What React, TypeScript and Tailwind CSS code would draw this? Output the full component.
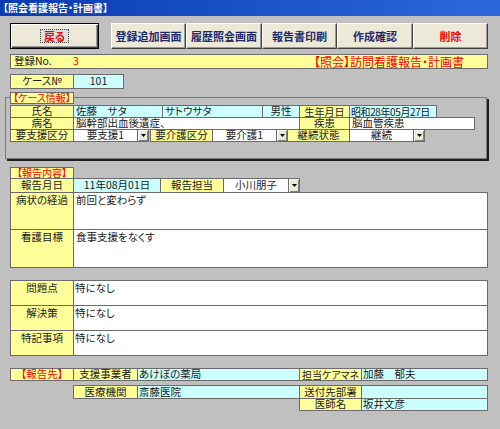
import React from "react";

const cell =
  "box-border border border-[#6b6b6b] flex items-center shrink-0 text-[10.5px] leading-none whitespace-nowrap text-[#1a1a1a]";
const yellow = "bg-[#ffff99] justify-center";
const cyan = "bg-[#ccffff]";

const Combo = ({ className, text }: { className: string; text: string }) => (
  <div className={`${cell} bg-white ${className}`}>
    <span className="flex-1 text-center">{text}</span>
    <span className="w-[11px] h-full box-border bg-[#ece9d8] border-l border-[#6b6b6b] shadow-[inset_1px_1px_0_#fff,inset_-1px_-1px_0_#808080] flex items-center justify-center">
      <svg width="5" height="3" viewBox="0 0 5 3">
        <path d="M0 0h5L2.5 3z" fill="#000" />
      </svg>
    </span>
  </div>
);

const btn =
  "box-border h-[26px] shrink-0 bg-[#ece9d8] border border-t-white border-l-white border-r-[#404040] border-b-[#404040] shadow-[inset_-1px_-1px_0_#9a9a9a] flex items-center justify-center text-[11px] font-bold text-[#1c2a6b]";

export default function App() {
  return (
    <div className="w-[500px] h-[429px] overflow-hidden bg-[#c0c0c0] flex flex-col [font-family:'Noto_Sans_CJK_JP','Liberation_Sans',sans-serif] [font-feature-settings:'palt']">
      {/* Title */}
      <div className="h-[16px] shrink-0 bg-gradient-to-r from-[#0a3ab4] to-[#2c68dc] flex items-center pl-[3px] text-white text-[10px] font-bold leading-none">
        【照会看護報告・計画書】
      </div>

      {/* Buttons */}
      <div className="flex mt-[7px] ml-[10px]">
        <div className="box-border h-[26px] w-[89px] shrink-0 bg-[#ece9d8] border border-black shadow-[inset_1px_1px_0_#fff,inset_-1px_-1px_0_#404040,inset_-2px_-2px_0_#9a9a9a] flex items-center justify-center">
          <span className="border border-dotted border-[#444] bg-[#d6e2e2] px-[3px] text-[11px] font-bold leading-[12px] text-[#ff0000]">
            戻る
          </span>
        </div>
        <div className={`${btn} w-[75px] ml-[12px]`}>登録追加画面</div>
        <div className={`${btn} w-[76px]`}>履歴照会画面</div>
        <div className={`${btn} w-[75px]`}>報告書印刷</div>
        <div className={`${btn} w-[76px]`}>作成確認</div>
        <div className={`${btn} w-[75px] text-[#ff0000]`}>削除</div>
      </div>

      {/* Registration bar */}
      <div className={`${cell} bg-[#ffff99] w-[478px] h-[15px] mt-[5px] ml-[10px] pl-[3px]`}>
        <span className="w-[59px]">登録No.</span>
        <span className="text-[#ff0000]">3</span>
        <span className="ml-auto mr-[23px] text-[12px] text-[#ff0000]">【照会】訪問看護報告・計画書</span>
      </div>

      {/* Case No */}
      <div className="flex mt-[5px] ml-[10px] h-[15px]">
        <div className={`${cell} ${yellow} w-[64px]`}>ケース№</div>
        <div className={`${cell} ${cyan} w-[51px] -ml-px justify-center`}>101</div>
      </div>

      {/* Case info group */}
      <div className="box-border mt-[8px] ml-[5px] w-[482px] h-[62px] shrink-0 border border-[#7a7a7a] shadow-[2px_2px_0_#1e1e1e] flex flex-col">
        <div className={`${cell} ${yellow} w-[64px] h-[12px] -mt-[6px] ml-[4px] text-[10px] text-[#ff0000]`}>【ケース情報】</div>
        <div className="flex ml-[4px] mt-[1px] h-[13px]">
          <div className={`${cell} ${yellow} w-[64px]`}>氏名</div>
          <div className={`${cell} ${cyan} w-[90px] -ml-px pl-[2px]`}>佐藤　サタ</div>
          <div className={`${cell} ${cyan} w-[101px] -ml-px pl-[2px]`}>サトウサタ</div>
          <div className={`${cell} ${cyan} w-[38px] -ml-px justify-center`}>男性</div>
          <div className={`${cell} ${yellow} w-[51px] -ml-px text-[10px]`}>生年月日</div>
          <div className={`${cell} ${cyan} w-[88px] -ml-px pl-[1px] text-[10px] tracking-[-0.4px]`}>昭和28年05月27日</div>
        </div>
        <div className="flex ml-[4px] -mt-px h-[13px]">
          <div className={`${cell} ${yellow} w-[64px]`}>病名</div>
          <div className={`${cell} bg-white w-[227px] -ml-px pl-[2px]`}>脳幹部出血後遺症、</div>
          <div className={`${cell} ${yellow} w-[51px] -ml-px`}>疾患</div>
          <div className={`${cell} bg-white w-[126px] -ml-px pl-[2px]`}>脳血管疾患</div>
        </div>
        <div className="flex ml-[4px] -mt-px h-[13px]">
          <div className={`${cell} ${yellow} w-[64px]`}>要支援区分</div>
          <Combo className="w-[76px] -ml-px" text="要支援1" />
          <div className={`${cell} ${yellow} w-[63px] ml-px`}>要介護区分</div>
          <Combo className="w-[76px] -ml-px" text="要介護1" />
          <div className={`${cell} ${yellow} w-[63px] -ml-px`}>継続状態</div>
          <Combo className="w-[76px] -ml-px" text="継続" />
        </div>
      </div>

      {/* Report content */}
      <div className={`${cell} ${yellow} w-[64px] h-[12px] mt-[8px] ml-[10px] text-[10px] text-[#ff0000]`}>【報告内容】</div>
      <div className="flex ml-[10px] -mt-px h-[15px]">
        <div className={`${cell} ${yellow} w-[64px]`}>報告月日</div>
        <div className={`${cell} ${cyan} w-[88px] -ml-px justify-center`}>11年08月01日</div>
        <div className={`${cell} ${yellow} w-[64px] -ml-px`}>報告担当</div>
        <Combo className="w-[77px] -ml-px" text="小川朋子" />
      </div>
      <div className="flex ml-[10px] -mt-px h-[38px]">
        <div className={`${cell} ${yellow} w-[64px] items-start pt-[2px]`}>病状の経過</div>
        <div className={`${cell} bg-white w-[415px] -ml-px items-start pt-[2px] pl-[2px]`}>前回と変わらず</div>
      </div>
      <div className="flex ml-[10px] -mt-px h-[39px]">
        <div className={`${cell} ${yellow} w-[64px] items-start pt-[2px]`}>看護目標</div>
        <div className={`${cell} bg-white w-[415px] -ml-px items-start pt-[2px] pl-[2px]`}>食事支援をなくす</div>
      </div>

      {/* Problems */}
      <div className="flex ml-[10px] mt-[12px] h-[26px]">
        <div className={`${cell} ${yellow} w-[64px] items-start pt-[2px]`}>問題点</div>
        <div className={`${cell} bg-white w-[415px] -ml-px items-start pt-[2px] pl-[1px]`}>特になし</div>
      </div>
      <div className="flex ml-[10px] -mt-px h-[26px]">
        <div className={`${cell} ${yellow} w-[64px] items-start pt-[2px]`}>解決策</div>
        <div className={`${cell} bg-white w-[415px] -ml-px items-start pt-[2px] pl-[1px]`}>特になし</div>
      </div>
      <div className="flex ml-[10px] -mt-px h-[26px]">
        <div className={`${cell} ${yellow} w-[64px] items-start pt-[2px]`}>特記事項</div>
        <div className={`${cell} bg-white w-[415px] -ml-px items-start pt-[2px] pl-[1px]`}>特になし</div>
      </div>

      {/* Report to */}
      <div className="flex ml-[10px] mt-[12px] h-[13px]">
        <div className={`${cell} ${yellow} w-[64px] text-[#ff0000]`}>【報告先】</div>
        <div className={`${cell} ${yellow} w-[65px] -ml-px`}>支援事業者</div>
        <div className={`${cell} ${cyan} w-[163px] -ml-px pl-[1px]`}>あけぼの薬局</div>
        <div className={`${cell} ${yellow} w-[63px] -ml-px text-[10px]`}>担当ケアマネ</div>
        <div className={`${cell} ${cyan} w-[127px] -ml-px pl-[1px]`}>加藤　郁夫</div>
      </div>
      <div className="flex ml-[73px] mt-[4px] h-[14px]">
        <div className={`${cell} ${yellow} w-[65px]`}>医療機関</div>
        <div className={`${cell} ${cyan} w-[163px] -ml-px pl-[1px]`}>斎藤医院</div>
        <div className={`${cell} ${yellow} w-[63px] -ml-px`}>送付先部署</div>
        <div className={`${cell} ${cyan} w-[127px] -ml-px`}></div>
      </div>
      <div className="flex ml-[299px] -mt-px h-[13px]">
        <div className={`${cell} ${yellow} w-[63px]`}>医師名</div>
        <div className={`${cell} ${cyan} w-[127px] -ml-px pl-[1px]`}>坂井文彦</div>
      </div>
    </div>
  );
}
